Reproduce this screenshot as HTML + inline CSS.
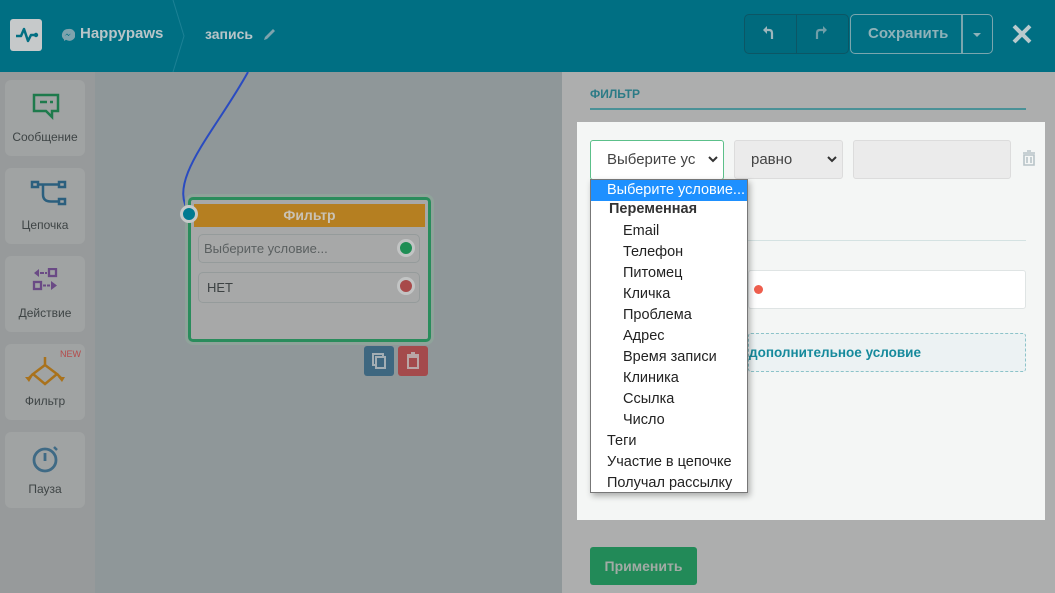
<!DOCTYPE html>
<html><head><meta charset="utf-8"><style>
*{box-sizing:border-box;margin:0;padding:0}
body{width:1055px;height:593px;overflow:hidden;position:relative;font-family:"Liberation Sans","DejaVu Sans",sans-serif;background:#8f9799}
.abs{position:absolute}
.hdr{left:0;top:0;width:1055px;height:72px;background:#006f83}
.side{left:0;top:72px;width:95px;height:521px;background:#979a9b}
.card{position:absolute;left:5px;width:80px;height:76px;background:#a0a3a3;border-radius:6px;text-align:center;font-size:12px;color:#3e4445}
.card span{position:absolute;left:0;right:0;bottom:12px}
.canvas{left:95px;top:72px;width:467px;height:521px;background:#8f9799}
.panel{left:562px;top:72px;width:493px;height:521px;background:#adaeae}
.dd div{height:21px;line-height:21px;font-size:14.5px;color:#222}
</style></head><body>
<div class="abs hdr">
 <div class="abs" style="left:10px;top:19px;width:32px;height:32px;background:#c6c9ca;border-radius:3px"></div>
 <svg class="abs" style="left:10px;top:19px" width="32" height="32"><path d="M6 17h5l3-7 4 12 3-6h5" fill="none" stroke="#036f82" stroke-width="2.5" stroke-linejoin="round"/><circle cx="26" cy="16" r="2.2" fill="#036f82"/></svg>
 <svg class="abs" style="left:61px;top:28px" width="14" height="14"><path d="M7 1a6 6 0 0 0-4 10.5V13l2-1.2A6 6 0 1 0 7 1z" fill="#7ea3ad"/><path d="M3.5 8l2.5-2.5 1.5 1.5 2.5-1.5-2.5 2.5-1.5-1.5z" fill="#006f83"/></svg>
 <div class="abs" style="left:80px;top:25px;font-size:15px;font-weight:bold;color:#b9c5c8">Happypaws</div>
 <svg class="abs" style="left:170px;top:0" width="20" height="72"><path d="M3 0 L14 36 L3 72" fill="none" stroke="#1c8195" stroke-width="1"/></svg>
 <div class="abs" style="left:205px;top:26px;font-size:14px;font-weight:bold;color:#b9c5c8">запись</div>
 <svg class="abs" style="left:262px;top:27px" width="15" height="15"><path d="M2 13 L3 10 L11 2 L13 4 L5 12 Z" fill="#7ea3ad"/></svg>
 <div class="abs" style="left:744px;top:14px;width:105px;height:40px;border:1px solid #0c5665;border-radius:5px;background:#006a7d"></div>
 <div class="abs" style="left:796px;top:15px;width:1px;height:38px;background:#0c5665"></div>
 <svg class="abs" style="left:762px;top:25px" width="16" height="16"><path d="M10 14V8q0-3-3-3H3" fill="none" stroke="#9db6bc" stroke-width="2.2"/><path d="M1 5l4-4v8z" fill="#9db6bc"/></svg>
 <svg class="abs" style="left:812px;top:25px" width="16" height="16"><path d="M5 14V8q0-3 3-3h4" fill="none" stroke="#6f9ea8" stroke-width="2.2"/><path d="M15 5l-4-4v8z" fill="#6f9ea8"/></svg>
 <div class="abs" style="left:850px;top:14px;width:143px;height:40px;border:1.5px solid #7aa6ae;border-radius:5px"></div>
 <div class="abs" style="left:961px;top:15px;width:1.5px;height:38px;background:#7aa6ae"></div>
 <div class="abs" style="left:868px;top:25px;font-size:15px;font-weight:bold;color:#8fb2b9">Сохранить</div>
 <div class="abs" style="left:973px;top:33px;border-left:4px solid transparent;border-right:4px solid transparent;border-top:4px solid #8fb2b9"></div>
 <svg class="abs" style="left:1012px;top:24px" width="20" height="20"><path d="M2 2L18 18M18 2L2 18" stroke="#b9cacd" stroke-width="4"/></svg>
</div>
<div class="abs side">
 <div class="card" style="top:8px"><svg class="abs" style="left:26px;top:12px" width="30" height="30"><path d="M3 3h24v16h-6v6l-6-6H3z" fill="none" stroke="#1e7a4c" stroke-width="2.5"/><path d="M9 10h7M19 10h3" stroke="#1e7a4c" stroke-width="2.5"/></svg><span>Сообщение</span></div>
 <div class="card" style="top:96px"><svg class="abs" style="left:24px;top:10px" width="40" height="32"><rect x="3" y="4" width="6" height="5" fill="none" stroke="#2b5f7e" stroke-width="2.5"/><rect x="30" y="4" width="6" height="5" fill="none" stroke="#2b5f7e" stroke-width="2.5"/><rect x="30" y="21" width="6" height="5" fill="none" stroke="#2b5f7e" stroke-width="2.5"/><path d="M9 6.5h21M14 6.5v10q0 7 8 7h8" fill="none" stroke="#2b5f7e" stroke-width="2.5"/></svg><span>Цепочка</span></div>
 <div class="card" style="top:184px"><svg class="abs" style="left:26px;top:12px" width="30" height="30"><path d="M3 5l5-4v8z M9 4h4v2H9z M14 4h2v2h-2z" fill="#6a4a85"/><rect x="18" y="1" width="7" height="7" fill="none" stroke="#6a4a85" stroke-width="2.3"/><rect x="3" y="14" width="7" height="7" fill="none" stroke="#6a4a85" stroke-width="2.3"/><path d="M12 16.5h3v2h-3z M16 16.5h3v2h-3z M20 13l6 4.5-6 4.5z" fill="#6a4a85"/></svg><span>Действие</span></div>
 <div class="card" style="top:272px"><div class="abs" style="right:4px;top:5px;font-size:9px;color:#b44a4a">NEW</div><svg class="abs" style="left:20px;top:12px" width="40" height="30"><path d="M20 1v8L8 18l12 10 12-10L20 9M8 18l-5 5M32 18l5 5" fill="none" stroke="#a9721c" stroke-width="2.5"/><path d="M0 21h7l-3 5zM33 21h7l-3 5z" fill="#a9721c"/></svg><span>Фильтр</span></div>
 <div class="card" style="top:360px"><svg class="abs" style="left:26px;top:10px" width="30" height="32"><circle cx="14" cy="18" r="11" fill="none" stroke="#3f6a85" stroke-width="2.8"/><path d="M14 11v8" stroke="#3f6a85" stroke-width="2.8"/><path d="M23 5l3 3" stroke="#3f6a85" stroke-width="2.5"/></svg><span>Пауза</span></div>
</div>
<div class="abs canvas">
 <svg class="abs" style="left:0;top:0" width="467" height="521"><path d="M95 141 C70 110 120 60 153 0" fill="none" stroke="#2a4bc0" stroke-width="2"/></svg>
 <div class="abs" style="left:93px;top:125px;width:243px;height:145px;border:3px solid #2a8c5c;border-radius:5px;background:#a7a8a8;box-shadow:0 0 0 3px #8fa39a"></div>
 <div class="abs" style="left:99px;top:132px;width:231px;height:23px;background:#b57f21;color:#c9c2b5;font-weight:bold;font-size:14px;text-align:center;line-height:23px">Фильтр</div>
 <div class="abs" style="left:85px;top:133px;width:18px;height:18px;border-radius:50%;background:#007a91;border:3px solid #c6c9c9"></div>
 <div class="abs" style="left:103px;top:162px;width:222px;height:29px;border:1px solid #959b9b;border-radius:5px;font-size:13px;color:#5a5f60;line-height:27px;padding-left:5px">Выберите условие...</div>
 <div class="abs" style="left:302px;top:167px;width:18px;height:18px;border-radius:50%;background:#1f8e55;border:3px solid #c2c4c4"></div>
 <div class="abs" style="left:103px;top:200px;width:222px;height:31px;border:1px solid #959b9b;border-radius:5px;font-size:13px;color:#3d4243;line-height:29px;padding-left:8px">НЕТ</div>
 <div class="abs" style="left:302px;top:205px;width:18px;height:18px;border-radius:50%;background:#a84a4a;border:3px solid #c2c4c4"></div>
 <div class="abs" style="left:269px;top:274px;width:30px;height:30px;background:#3e6780;border-radius:3px"></div>
 <svg class="abs" style="left:269px;top:274px" width="30" height="30"><rect x="9" y="8" width="10" height="11" fill="none" stroke="#a3aeb4" stroke-width="2"/><rect x="12" y="11" width="9" height="11" fill="#3e6780" stroke="#a3aeb4" stroke-width="2"/></svg>
 <div class="abs" style="left:303px;top:274px;width:30px;height:30px;background:#a44a4c;border-radius:3px"></div>
 <svg class="abs" style="left:303px;top:274px" width="30" height="30"><path d="M9 9h12M13 7h4M10 11h10v11H10z" fill="none" stroke="#b9a6a6" stroke-width="2"/></svg>
</div>
<div class="abs panel">
 <div class="abs" style="left:28px;top:15px;font-size:12px;font-weight:bold;color:#2b7b86">ФИЛЬТР</div>
 <div class="abs" style="left:28px;top:36px;width:436px;height:2px;background:#4a9197"></div>
 <div class="abs" style="left:15px;top:50px;width:468px;height:398px;background:#f4f6f5"></div>
 <div class="abs" style="left:28px;top:68px;width:134px;height:40px;border:1.5px solid #5cc08a;border-radius:3px;background:#fff;font-size:15px;color:#444;line-height:37px;padding-left:16px">Выберите ус</div>
 <svg class="abs" style="left:146px;top:84px" width="10" height="8"><path d="M1 1l4 4 4-4" fill="none" stroke="#333" stroke-width="2"/></svg>
 <div class="abs" style="left:172px;top:68px;width:109px;height:39px;border:1px solid #dcdcdc;border-radius:3px;background:#ebebeb;font-size:15px;color:#444;line-height:37px;padding-left:16px">равно</div>
 <svg class="abs" style="left:265px;top:84px" width="10" height="8"><path d="M1 1l4 4 4-4" fill="none" stroke="#333" stroke-width="2"/></svg>
 <div class="abs" style="left:291px;top:68px;width:158px;height:39px;border:1px solid #dcdcdc;border-radius:3px;background:#ebebeb"></div>
 <svg class="abs" style="left:459px;top:78px" width="16" height="16"><path d="M2 3h12M6 1h4M3 5h10v10H3zM6 7v6M10 7v6" fill="none" stroke="#b8c4c8" stroke-width="1.6"/></svg>
 <div class="abs" style="left:186px;top:168px;width:278px;height:1px;background:#d4e2e2"></div>
 <div class="abs" style="left:186px;top:198px;width:278px;height:39px;border:1px solid #dfe4e4;border-radius:3px;background:#fff"></div>
 <div class="abs" style="left:192px;top:213px;width:9px;height:9px;border-radius:50%;background:#ee5e4d"></div>
 <div class="abs" style="left:186px;top:261px;width:278px;height:39px;border:1px dashed #8cc3c9;border-radius:3px;background:#ecf2f3;font-size:13.5px;font-weight:bold;color:#168a9c;line-height:37px">дополнительное условие</div>
 <div class="abs" style="left:28px;top:475px;width:107px;height:38px;background:#228a58;border-radius:3px;color:#a2aba5;font-size:14px;font-weight:bold;text-align:center;line-height:38px">Применить</div>
 <div class="abs dd" style="left:28px;top:107px;width:158px;height:314px;background:#fff;border:1px solid #777;box-shadow:2px 3px 6px rgba(0,0,0,.3)">
  <div style="background:#1e90ff;color:#fff;padding-left:16px">Выберите условие...</div>
  <div style="font-weight:bold;padding-left:18px;height:20px;line-height:16px;color:#333">Переменная</div>
  <div style="padding-left:32px">Email</div>
  <div style="padding-left:32px">Телефон</div>
  <div style="padding-left:32px">Питомец</div>
  <div style="padding-left:32px">Кличка</div>
  <div style="padding-left:32px">Проблема</div>
  <div style="padding-left:32px">Адрес</div>
  <div style="padding-left:32px">Время записи</div>
  <div style="padding-left:32px">Клиника</div>
  <div style="padding-left:32px">Ссылка</div>
  <div style="padding-left:32px">Число</div>
  <div style="padding-left:16px">Теги</div>
  <div style="padding-left:16px">Участие в цепочке</div>
  <div style="padding-left:16px">Получал рассылку</div>
 </div>
</div>
</body></html>
